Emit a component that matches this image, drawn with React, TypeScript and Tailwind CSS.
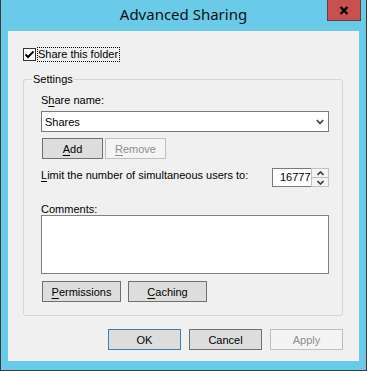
import React from 'react'

// one letter of a label carries the keyboard accelerator underline
function Acc({ text, at }: { text: string; at: number }) {
  return (
    <>
      {text.slice(0, at)}
      <span className="underline underline-offset-[2px] decoration-1">{text[at]}</span>
      {text.slice(at + 1)}
    </>
  )
}

function Chevron({ up = false }: { up?: boolean }) {
  return (
    <svg width="7" height="5" viewBox="0 0 7 5" className="block">
      <path
        d={up ? 'M0.5 4 L3.5 1 L6.5 4' : 'M0.5 1 L3.5 4 L6.5 1'}
        fill="none"
        stroke="#3c3c3c"
        strokeWidth="1.6"
      />
    </svg>
  )
}

export default function App() {
  return (
    <div className="relative flex h-[371px] w-[367px] flex-col border-x border-b border-[#3a3a3a] bg-[#6acbe9] px-[7px] font-['Liberation_Sans',Arial,sans-serif] text-[11px] text-black">
      {/* title bar */}
      <div className="h-[31px] pt-[4px] text-center font-['Noto_Sans',sans-serif] text-[15px] leading-[20px] text-[#111]">
        Advanced Sharing
      </div>
      <div className="absolute right-[5px] top-0 flex h-[21px] w-[34px] items-center justify-center border-x border-b border-[#6b3b3b] bg-[#c75050]">
        <svg width="10" height="9" viewBox="0 0 10 9">
          <path d="M1.5 1 L8.5 8 M8.5 1 L1.5 8" stroke="#000" strokeWidth="2.4" />
        </svg>
      </div>

      {/* client area */}
      <div className="flex h-[330px] flex-col bg-[#f0f0f0]">
        <div className="mt-[16px] flex items-start pl-[15px]">
          <div className="mt-[1px] flex h-[13px] w-[13px] items-center justify-center border border-[#333] bg-white">
            <svg width="11" height="11" viewBox="0 0 11 11">
              <path d="M1.5 5.5 L4 8 L9.5 2.5" fill="none" stroke="#000" strokeWidth="2" />
            </svg>
          </div>
          <span className="ml-[1px] h-[15px] border border-dotted border-black pr-[1px] leading-[13px]">
            Share this folder
          </span>
        </div>

        <div className="relative ml-[15px] mt-[17px] flex h-[237px] w-[320px] flex-col rounded-[3px] border border-[#d5d5d5] pl-[17px] pt-[14px]">
          <span className="absolute left-[8px] top-[-7px] bg-[#f0f0f0] px-[1px] leading-[12px]">Settings</span>

          <div className="h-[12px] leading-[12px]">
            <Acc text="Share name:" at={1} />
          </div>
          <div className="mt-[5px] flex h-[21px] w-[288px] items-center justify-between border border-[#7a7a7a] bg-white pl-[3px] pr-[4px]">
            <span className="leading-[12px]">Shares</span>
            <svg width="8" height="6" viewBox="0 0 8 6">
              <path d="M0.8 1 L4 4.4 L7.2 1" fill="none" stroke="#4a4a4a" strokeWidth="1.8" />
            </svg>
          </div>

          <div className="ml-[1px] mt-[6px] flex gap-[2px]">
            <div className="flex h-[21px] w-[61px] items-center justify-center border border-[#707070] bg-[#dddddd]">
              <span className="leading-[12px]">
                <Acc text="Add" at={0} />
              </span>
            </div>
            <div className="flex h-[21px] w-[61px] items-center justify-center border border-[#bfbfbf] bg-[#f4f4f4] text-[#8d8d8d]">
              <span className="leading-[12px]">
                <Acc text="Remove" at={0} />
              </span>
            </div>
          </div>

          <div className="mt-[9px] flex w-[288px] items-start justify-between">
            <span className="mt-[1px] leading-[12px]">
              <Acc text="Limit the number of simultaneous users to:" at={0} />
            </span>
            <div className="flex h-[19px]">
              <div className="w-[39px] whitespace-nowrap border-y border-l border-[#7a7a7a] bg-white pl-[7px] pt-[2px] leading-[13px]">
                16777
              </div>
              <div className="flex w-[18px] flex-col gap-[1px] bg-[#c2c2c2] p-[1px]">
                <div className="flex flex-1 items-center justify-center bg-[#f3f3f3]">
                  <Chevron up />
                </div>
                <div className="flex flex-1 items-center justify-center bg-[#f3f3f3]">
                  <Chevron />
                </div>
              </div>
            </div>
          </div>

          <div className="mt-[16px] h-[12px] leading-[12px]">
            <Acc text="Comments:" at={1} />
          </div>
          <div className="h-[59px] w-[288px] border border-[#828282] bg-white" />

          <div className="ml-[1px] mt-[7px] flex gap-[7px]">
            <div className="flex h-[21px] w-[79px] items-center justify-center border border-[#707070] bg-[#dddddd]">
              <span className="leading-[12px]">
                <Acc text="Permissions" at={0} />
              </span>
            </div>
            <div className="flex h-[21px] w-[79px] items-center justify-center border border-[#707070] bg-[#dddddd]">
              <span className="leading-[12px]">
                <Acc text="Caching" at={0} />
              </span>
            </div>
          </div>
        </div>

        <div className="mt-[13px] flex justify-end gap-[8px] pr-[16px]">
          <div className="flex h-[21px] w-[73px] items-center justify-center border border-[#3c7fb1] bg-[#dddddd] leading-[12px]">
            OK
          </div>
          <div className="flex h-[21px] w-[73px] items-center justify-center border border-[#707070] bg-[#dddddd] leading-[12px]">
            Cancel
          </div>
          <div className="flex h-[21px] w-[73px] items-center justify-center border border-[#bfbfbf] bg-[#f4f4f4] leading-[12px] text-[#8d8d8d]">
            Apply
          </div>
        </div>
      </div>
    </div>
  )
}
